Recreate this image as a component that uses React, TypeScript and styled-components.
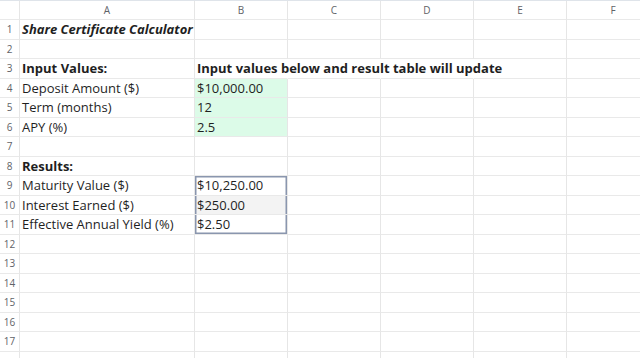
import styled, { createGlobalStyle, css } from "styled-components";

const GlobalStyle = createGlobalStyle`
  html, body {
    margin: 0;
    padding: 0;
    background: #ffffff;
    overflow: hidden;
  }
  body {
    font-family: "Open Sans", "Noto Sans", sans-serif;
    color: #1f1f1f;
  }
`;

type BoxPos = "top" | "mid" | "bottom";

type CellData = {
  text?: string;
  bold?: boolean;
  italic?: boolean;
  fill?: string;
  box?: BoxPos;
  spill?: boolean;
};

const COLUMNS = ["A", "B", "C", "D", "E", "F"];

const rows: Record<number, Record<string, CellData>> = {
  1: { A: { text: "Share Certificate Calculator", bold: true, italic: true } },
  3: {
    A: { text: "Input Values:", bold: true },
    B: { text: "Input values below and result table will update", bold: true, spill: true },
    C: { spill: true },
    D: { spill: true },
  },
  4: { A: { text: "Deposit Amount ($)" }, B: { text: "$10,000.00", fill: "#dcfbe8" } },
  5: { A: { text: "Term (months)" }, B: { text: "12", fill: "#dcfbe8" } },
  6: { A: { text: "APY (%)" }, B: { text: "2.5", fill: "#dcfbe8" } },
  8: { A: { text: "Results:", bold: true } },
  9: { A: { text: "Maturity Value ($)" }, B: { text: "$10,250.00", box: "top" } },
  10: { A: { text: "Interest Earned ($)" }, B: { text: "$250.00", box: "mid", fill: "#f3f3f3" } },
  11: { A: { text: "Effective Annual Yield (%)" }, B: { text: "$2.50", box: "bottom" } },
};

// 17 numbered rows are visible; an 18th row only peeks in at the bottom edge
const VISIBLE_ROWS = 17;

export default function App() {
  const rowNumbers = Array.from({ length: VISIBLE_ROWS + 1 }, (_, i) => i + 1);

  return (
    <>
      <GlobalStyle />
      <Sheet>
        <Grid>
          <Corner />
          {COLUMNS.map((col) => (
            <ColHeader key={col}>{col}</ColHeader>
          ))}
          {rowNumbers.map((n) => (
            <Row key={n} n={n} label={n <= VISIBLE_ROWS ? String(n) : ""} />
          ))}
        </Grid>
      </Sheet>
    </>
  );
}

function Row({ n, label }: { n: number; label: string }) {
  const data = rows[n] || {};
  return (
    <>
      <RowHeader>{label}</RowHeader>
      {COLUMNS.map((col) => {
        const c = data[col] || {};
        return (
          <Cell
            key={col}
            $bold={c.bold}
            $italic={c.italic}
            $fill={c.fill}
            $box={c.box}
            $spill={c.spill}
          >
            {c.text}
          </Cell>
        );
      })}
    </>
  );
}

const Sheet = styled.div`
  width: 640px;
  height: 358px;
  overflow: hidden;
  border-top: 1px solid #dfe4ea;
  box-sizing: border-box;
`;

const Grid = styled.div`
  display: grid;
  grid-template-columns: 20px 175px 93px 93px 93px 93px 93px;
  grid-template-rows: 19px;
  grid-auto-rows: 19.5px;
  width: 660px;
`;

const gridLines = css`
  box-sizing: border-box;
  border-right: 1px solid #e6e6e6;
  border-bottom: 1px solid #e9e9e9;
`;

const Corner = styled.div`
  ${gridLines}
`;

const ColHeader = styled.div`
  ${gridLines}
  display: flex;
  align-items: center;
  justify-content: center;
  font-size: 10px;
  color: #5f6368;
`;

const RowHeader = styled.div`
  ${gridLines}
  display: flex;
  align-items: center;
  justify-content: center;
  font-size: 10px;
  color: #5f6368;
`;

const boxShadow = (pos?: BoxPos) => {
  if (!pos) return "none";
  const c = "#8a96ae";
  const sides = [`inset 1.5px 0 0 ${c}`, `inset -1.5px 0 0 ${c}`];
  if (pos === "top") sides.push(`inset 0 1.5px 0 ${c}`);
  if (pos === "bottom") sides.push(`inset 0 -1.5px 0 ${c}`);
  return sides.join(", ");
};

const Cell = styled.div<{
  $bold?: boolean;
  $italic?: boolean;
  $fill?: string;
  $box?: BoxPos;
  $spill?: boolean;
}>`
  ${gridLines}
  display: flex;
  align-items: center;
  padding: 0 2px;
  font-size: 13px;
  white-space: nowrap;
  overflow: visible;
  position: relative;
  z-index: ${(p) => (p.$spill ? 1 : 0)};
  font-weight: ${(p) => (p.$bold ? 700 : 400)};
  font-style: ${(p) => (p.$italic ? "italic" : "normal")};
  background: ${(p) => p.$fill || "transparent"};
  box-shadow: ${(p) => boxShadow(p.$box)};
  ${(p) => p.$spill && "border-right-color: transparent;"}
`;
